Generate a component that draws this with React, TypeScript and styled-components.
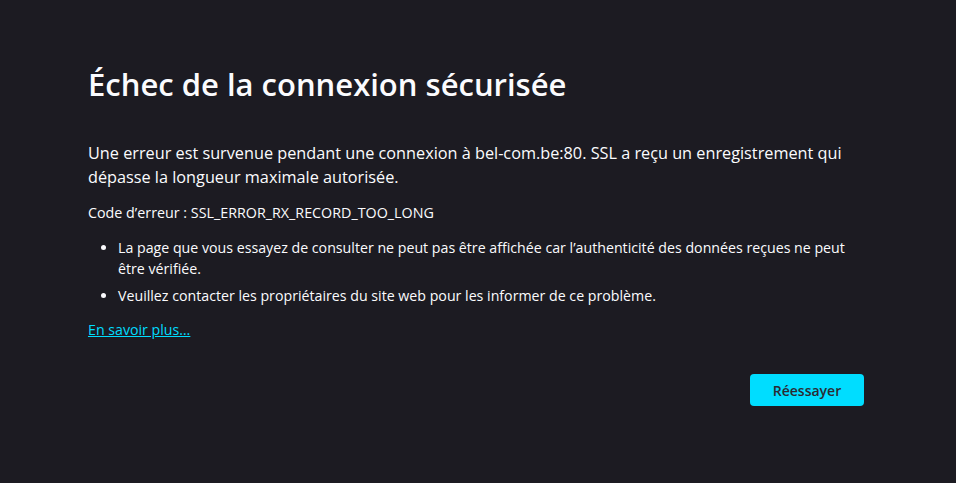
import React from "react";
import styled, { createGlobalStyle } from "styled-components";

const Global = createGlobalStyle`
  html, body { margin: 0; padding: 0; background: #1c1b22; }
  body { font-family: "Segoe UI", "Open Sans", "Noto Sans", sans-serif; color: #fbfbfe; }
  #root { min-height: 483px; }
`;

const Page = styled.main`
  min-height: 483px;
  display: flex;
  justify-content: center;
  background: #1c1b22;
`;

const Container = styled.div`
  width: 780px;
  padding-top: 64px;
  display: flex;
  flex-direction: column;
`;

const Title = styled.h1`
  margin: 0;
  font-size: 31px;
  line-height: 40px;
  font-weight: 600;
  color: #fbfbfe;
`;

const Lead = styled.p`
  margin: 37px 0 0;
  font-size: 16.25px;
  line-height: 24px;
`;

const Code = styled.p`
  margin: 14px 0 0;
  font-size: 14.3px;
  line-height: 20px;
`;

const List = styled.ul`
  margin: 14px 0 0;
  padding: 0 0 0 30px;
  display: flex;
  flex-direction: column;
  gap: 6px;
`;

const Item = styled.li`
  font-size: 14.2px;
  line-height: 21px;
`;

const Link = styled.a`
  margin-top: 14px;
  align-self: flex-start;
  font-size: 14.2px;
  line-height: 20px;
  color: #00ddff;
  text-decoration: underline;
  cursor: pointer;
`;

const Actions = styled.div`
  margin-top: 34px;
  display: flex;
  justify-content: flex-end;
  padding-right: 4px;
`;

const Button = styled.button`
  width: 114px;
  height: 32px;
  border: none;
  border-radius: 4px;
  background: #00ddff;
  color: #2b2a33;
  font-family: inherit;
  font-size: 14px;
  font-weight: 600;
  cursor: pointer;
`;

export default function App() {
  return (
    <Page>
      <Global />
      <Container>
        <Title>Échec de la connexion sécurisée</Title>
        <Lead>
          Une erreur est survenue pendant une connexion à bel-com.be:80. SSL a reçu un enregistrement qui
          dépasse la longueur maximale autorisée.
        </Lead>
        <Code>Code d’erreur : SSL_ERROR_RX_RECORD_TOO_LONG</Code>
        <List>
          <Item>
            La page que vous essayez de consulter ne peut pas être affichée car l’authenticité des données reçues ne peut
            être vérifiée.
          </Item>
          <Item>Veuillez contacter les propriétaires du site web pour les informer de ce problème.</Item>
        </List>
        <Link>En savoir plus…</Link>
        <Actions>
          <Button>Réessayer</Button>
        </Actions>
      </Container>
    </Page>
  );
}
